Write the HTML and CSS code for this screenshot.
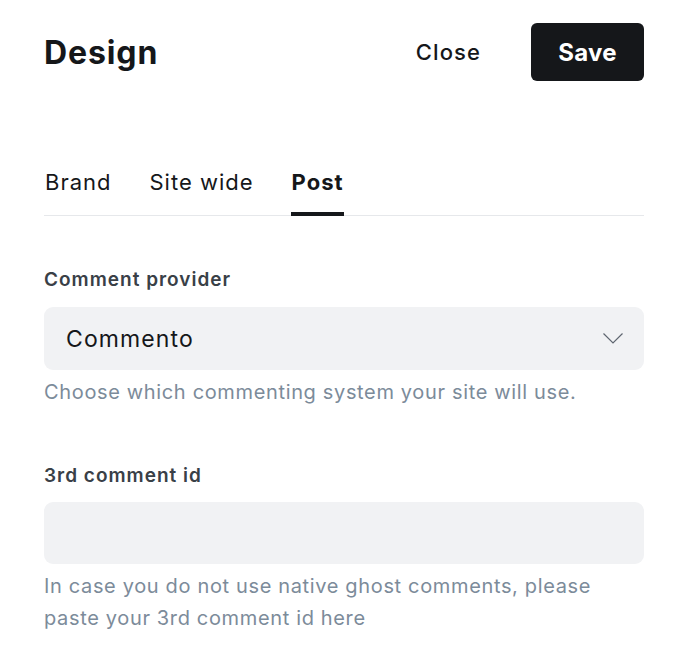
FILE: index.html
```html
<!DOCTYPE html>
<html>
<head>
<meta charset="utf-8">
<link rel="stylesheet" href="styles.css">
</head>
<body>
<div class="page">
  <header class="header">
    <h1 class="title">Design</h1>
    <div class="actions">
      <button class="btn-close">Close</button>
      <button class="btn-save">Save</button>
    </div>
  </header>
  <nav class="tabs">
    <span class="tab">Brand</span>
    <span class="tab">Site wide</span>
    <span class="tab active">Post</span>
  </nav>
  <div class="field field-first">
    <label class="label">Comment provider</label>
    <div class="select">
      <span class="select-value">Commento</span>
      <svg class="chevron" width="20" height="11" viewBox="0 0 20 11"><path d="M0.5 0.5 L10 10 L19.5 0.5" fill="none" stroke="#5f6670" stroke-width="1.2"/></svg>
    </div>
    <p class="hint">Choose which commenting system your site will use.</p>
  </div>
  <div class="field field-second">
    <label class="label">3rd comment id</label>
    <div class="input"></div>
    <p class="hint">In case you do not use native ghost comments, please paste your 3rd comment id here</p>
  </div>
</div>
</body>
</html>
```
FILE: styles.css
```css
* { box-sizing: border-box; }
html, body { margin: 0; padding: 0; background: #fff; }
body { font-family: Inter, "Noto Sans", sans-serif; color: #15171a; }
.page { padding: 23px 42px 0 44px; }
.header { display: flex; align-items: center; justify-content: space-between; height: 58px; }
.title { margin: 0; font-size: 32px; font-weight: 700; letter-spacing: 0.9px; }
.actions { display: flex; align-items: center; gap: 50px; }
.btn-close { border: 0; background: none; padding: 0; font-family: inherit; font-size: 22px; font-weight: 500; letter-spacing: 1.1px; color: #15171a; }
.btn-save { border: 0; background: #15171a; color: #fff; font-family: inherit; font-size: 24px; font-weight: 700; letter-spacing: 0.3px; width: 113px; height: 58px; border-radius: 6px; padding: 0; }
.tabs { display: flex; gap: 37px; margin-top: 86px; border-bottom: 1px solid #e6e8eb; }
.tab { font-size: 22px; line-height: 30px; padding-bottom: 15px; letter-spacing: 1px; color: #15171a; border-bottom: 4px solid transparent; margin-bottom: -1px; padding-left: 1px; }
.tab.active { font-weight: 700; border-bottom-color: #15171a; }
.field { display: flex; flex-direction: column; }
.field-first { margin-top: 52px; }
.field-second { margin-top: 56px; }
.label { font-size: 19px; font-weight: 600; line-height: 24px; letter-spacing: 1px; color: #394047; }
.select, .input { margin-top: 15px; height: 63px; background: #f1f2f4; border-radius: 9px; display: flex; align-items: center; justify-content: space-between; padding: 0 21px 0 22px; }
.input { height: 62px; margin-top: 14px; }
.select-value { font-size: 23px; letter-spacing: 1.1px; color: #15171a; }
.chevron { display: block; }
.hint { margin: 6px 0 0; font-size: 20px; line-height: 32px; letter-spacing: 0.65px; color: #7c8b9a; max-width: 590px; }
```
